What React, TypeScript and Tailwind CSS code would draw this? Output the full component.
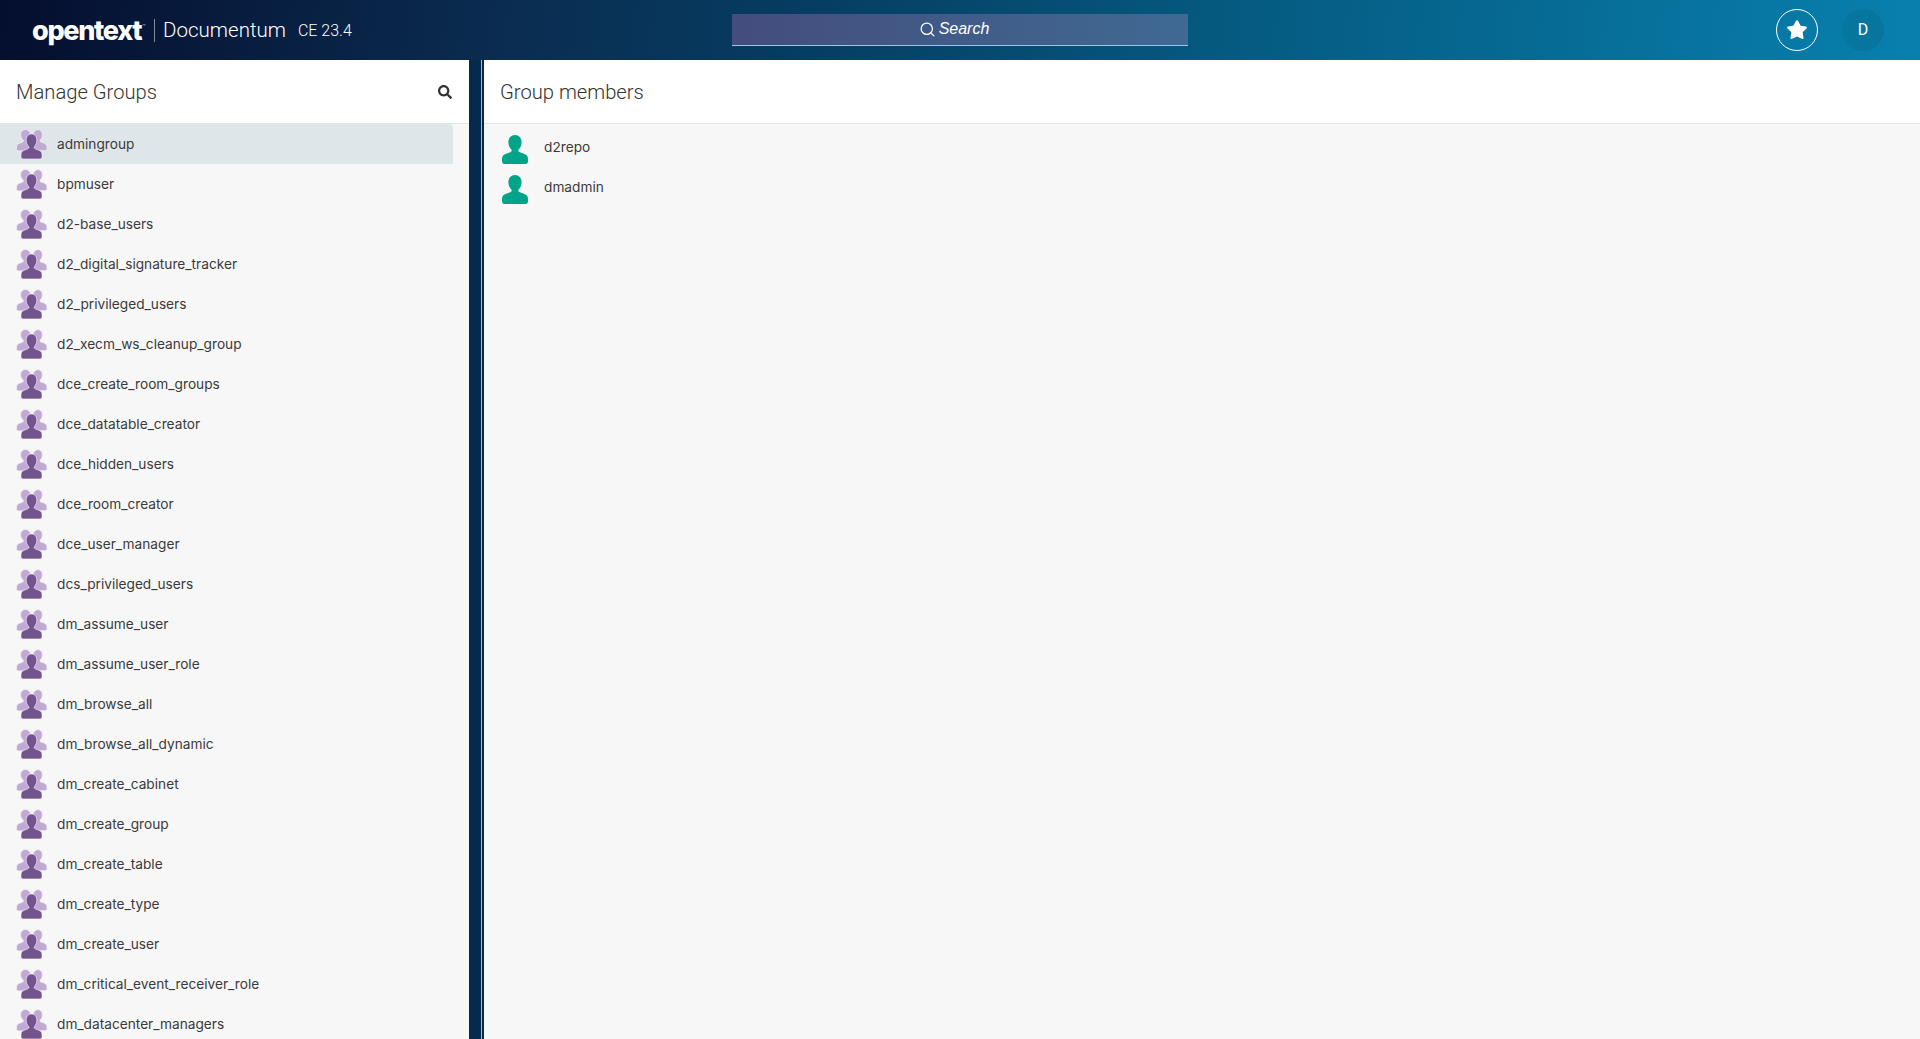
import { Search, Star } from "lucide-react";
import { FaSearch } from "react-icons/fa";

const GROUPS = [
  "admingroup",
  "bpmuser",
  "d2-base_users",
  "d2_digital_signature_tracker",
  "d2_privileged_users",
  "d2_xecm_ws_cleanup_group",
  "dce_create_room_groups",
  "dce_datatable_creator",
  "dce_hidden_users",
  "dce_room_creator",
  "dce_user_manager",
  "dcs_privileged_users",
  "dm_assume_user",
  "dm_assume_user_role",
  "dm_browse_all",
  "dm_browse_all_dynamic",
  "dm_create_cabinet",
  "dm_create_group",
  "dm_create_table",
  "dm_create_type",
  "dm_create_user",
  "dm_critical_event_receiver_role",
  "dm_datacenter_managers",
];

const MEMBERS = ["d2repo", "dmadmin"];

function Person({ className }: { className?: string }) {
  return (
    <svg viewBox="0 0 26 29" className={className} fill="currentColor" aria-hidden>
      <path d="M13 0c3.900 0 6.600 3 6.600 7.200 0 3-1.200 5.600-2.900 7.300-.5.500-.6 1.300-.2 1.800.6.700 1.600 1.100 3.300 1.700 3.800 1.200 6.200 2.600 6.200 5.600v2.800c0 1.500-1.200 2.600-2.700 2.600H2.700C1.200 29 0 27.900 0 26.400v-2.800c0-3 2.400-4.400 6.200-5.600 1.700-.6 2.700-1 3.300-1.700.4-.5.300-1.300-.2-1.800C7.600 12.800 6.400 10.200 6.400 7.200 6.400 3 9.100 0 13 0z" />
    </svg>
  );
}

function GroupIcon() {
  return (
    <svg viewBox="0 0 31 30" className="h-[30px] w-[31px] shrink-0" aria-hidden>
      <g fill="#c0a9d3" stroke="#f3eff6" strokeWidth="0.8">
        <path d="M9.500.5c2.900 0 4.900 2.200 4.900 5.200 0 2.200-.9 4-2.100 5.300-.4.400-.4 1-.1 1.400.5.500 1.200.8 2.400 1.200 2.800.9 4.600 1.900 4.600 4.100V20c0 1-.9 1.900-2 1.900H2.500c-1.100 0-2-.9-2-1.900v-2c0-2 1.400-3.200 4.300-4.200 1.300-.4 2-.7 2.500-1.200.3-.4.300-1-.1-1.400C5.500 9.700 4.600 7.900 4.600 5.700 4.600 2.700 6.600.5 9.500.5z" />
        <path d="M21.500.5c2.900 0 4.900 2.200 4.900 5.200 0 2.200-.9 4-2.100 5.300-.4.400-.4 1-.1 1.400.5.500 1.200.8 2.500 1.200 2.900 1 4.300 2.200 4.300 4.200v2c0 1-.9 1.900-2 1.900H14.500c-1.100 0-2-.9-2-1.900v-2c0-2.200 1.800-3.200 4.600-4.100 1.200-.4 1.900-.7 2.400-1.200.3-.4.300-1-.1-1.400-1.200-1.300-2.100-3.100-2.100-5.300 0-3 2-5.200 4.900-5.200z" />
      </g>
      <g transform="translate(5 5) scale(0.808 0.862)" fill="#74548f" stroke="#f3eff6" strokeWidth="0.8">
        <path d="M13 0c3.900 0 6.600 3 6.600 7.200 0 3-1.200 5.600-2.900 7.300-.5.500-.6 1.300-.2 1.800.6.700 1.600 1.100 3.300 1.700 3.800 1.200 6.200 2.600 6.200 5.600v2.800c0 1.500-1.200 2.600-2.700 2.600H2.700C1.200 29 0 27.900 0 26.400v-2.800c0-3 2.400-4.400 6.200-5.600 1.700-.6 2.700-1 3.300-1.700.4-.5.300-1.300-.2-1.800C7.600 12.800 6.400 10.200 6.400 7.200 6.400 3 9.100 0 13 0z" />
      </g>
    </svg>
  );
}

function PanelTitle({ children }: { children: string }) {
  return <h2 className="pt-0.5 text-[20.2px] font-light leading-none text-[#333333]">{children}</h2>;
}

function Header() {
  return (
    <header className="flex h-[60px] shrink-0 items-center bg-[linear-gradient(97deg,#050e2e_0%,#0a2c50_26%,#063d62_42%,#055a80_64%,#0880ae_100%)] text-white">
      {/* Logo: the wordmark stays plain text */}
      <div className="flex w-[732px] shrink-0 items-center pl-8">
        <span className="font-['Inter',sans-serif] text-[27px] font-extrabold leading-none tracking-[-1.3px]">
          opentext
        </span>
        <span className="mb-2 ml-px text-[6px] leading-none text-white/70">™</span>
        <span className="ml-[8px] h-[23px] w-px bg-white/50" />
        <span className="ml-[8px] text-[20.5px] font-light leading-none">Documentum</span>
        <span className="ml-3 mt-0.5 text-[16px] font-light leading-none">CE 23.4</span>
      </div>

      <div className="flex h-8 w-[456px] shrink-0 items-center justify-center gap-[3px] border-b border-[#9cc4f0] bg-[linear-gradient(to_right,#444d7d,#3f6a93)] pr-3">
        <Search className="h-[17px] w-[17px] text-white" strokeWidth={1.75} />
        <span className="-mt-0.5 font-['Liberation_Sans',sans-serif] text-base italic leading-none">Search</span>
      </div>

      <div className="ml-auto flex items-center gap-6 pr-9">
        <div className="flex h-[42px] w-[42px] items-center justify-center rounded-full border border-white">
          <Star className="h-[22px] w-[22px] fill-white text-white" strokeWidth={1.5} />
        </div>
        <div className="flex h-[42px] w-[42px] items-center justify-center rounded-full bg-[#07769e] text-base">
          D
        </div>
      </div>
    </header>
  );
}

export default function App() {
  return (
    <div className="flex h-screen flex-col overflow-hidden bg-[#f7f7f7] font-['Roboto',sans-serif]">
      <Header />

      <div className="flex min-h-0 flex-1">
        <aside className="flex w-[469px] shrink-0 flex-col">
          <div className="flex h-[64px] shrink-0 items-center justify-between border-b border-[#e4e4e4] bg-white pl-4 pr-[17px]">
            <PanelTitle>Manage Groups</PanelTitle>
            <FaSearch className="h-[14px] w-[14px] text-[#333333]" />
          </div>
          <ul className="min-h-0 flex-1 overflow-hidden pr-4">
            {GROUPS.map((name, i) => (
              <li
                key={name}
                className={`flex h-10 items-center gap-[10px] pl-4 font-['Inter',sans-serif] text-[13.7px] text-[#3a3a3a] ${
                  i === 0 ? "rounded-tr-[4px] bg-[#dfe6ea]" : ""
                }`}
              >
                <GroupIcon />
                <span className="mt-px">{name}</span>
              </li>
            ))}
          </ul>
        </aside>

        {/* Splitter between the two panels */}
        <div className="flex w-[15px] shrink-0 bg-[#062a4b]">
          <span className="ml-3 w-px bg-[#8fbdea]" />
        </div>

        <main className="flex min-w-0 flex-1 flex-col">
          <div className="flex h-[64px] shrink-0 items-center border-b border-[#e4e4e4] bg-white pl-4">
            <PanelTitle>Group members</PanelTitle>
          </div>
          <ul className="pt-[5px]">
            {MEMBERS.map((name) => (
              <li key={name} className="flex h-10 items-center gap-4 pl-[18px] font-['Inter',sans-serif] text-[13.7px] text-[#3a3a3a]">
                <Person className="h-[29px] w-[26px] shrink-0 text-[#00a488]" />
                <span className="-mt-1">{name}</span>
              </li>
            ))}
          </ul>
        </main>
      </div>
    </div>
  );
}
